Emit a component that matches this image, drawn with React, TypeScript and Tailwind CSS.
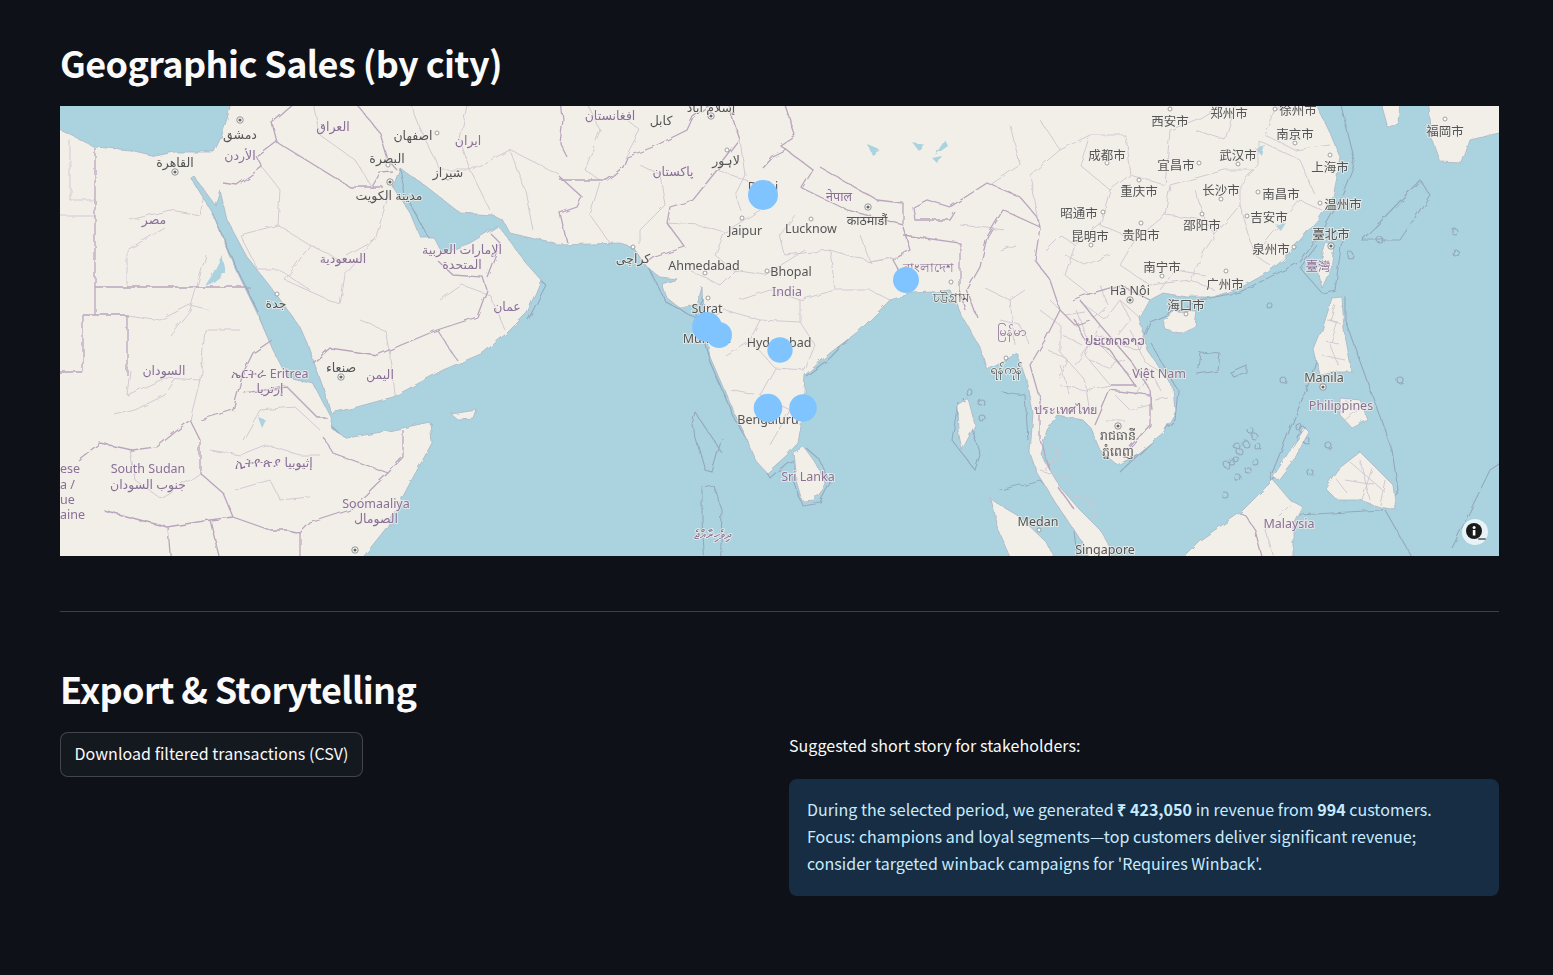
import React from "react";

const WATER = "#aad3df";
const LAND = "#f2efe9";

// Map drawing uses page coordinates through the svg viewBox (60 106 1439 450)
const mainland =
  "M30 118 L60 130 L75 137 L95 147 L130 150 L155 156 L175 152 L214 152 L222 135 L228 115 L235 85 L1310 85 L1317 106 L1330 133 L1340 157 L1337 177 L1333 197 L1320 217 L1300 240 L1283 260 L1267 273 L1240 288 L1213 297 L1187 297 L1163 293 L1150 300 L1140 318 L1147 350 L1173 387 L1175 413 L1163 433 L1133 457 L1117 465 L1100 450 L1090 427 L1083 420 L1057 415 L1047 430 L1040 453 L1060 487 L1080 510 L1100 530 L1110 547 L1116 580 L1098 580 L1083 543 L1060 510 L1037 473 L1030 453 L1033 413 L1028 385 L1017 353 L1003 362 L987 370 L980 347 L970 330 L960 313 L950 290 L932 292 L913 293 L890 300 L860 330 L830 353 L805 375 L802 420 L798 443 L787 455 L767 473 L757 462 L733 410 L710 357 L707 340 L703 313 L702 287 L697 305 L680 308 L667 298 L662 284 L677 279 L660 277 L647 267 L633 247 L620 243 L560 245 L510 233 L503 220 L493 215 L460 213 L427 187 L400 168 L393 187 L410 213 L420 237 L433 237 L443 253 L470 243 L498 226 L507 237 L525 262 L541 280 L527 313 L507 333 L483 353 L443 370 L393 397 L353 408 L331 413 L323 387 L307 343 L300 327 L273 290 L247 257 L227 220 L220 190 L215 205 L194 176 L191 178 L212 212 L233 263 L257 313 L273 350 L287 377 L313 383 L330 416 L333 430 L347 438 L393 430 L430 422 L432 443 L410 483 L387 527 L345 580 L30 580 Z";

const islands = [
  "M1000 505 L1020 517 L1047 543 L1065 580 L1020 580 L998 530 L990 498 Z",
  "M1160 580 L1200 540 L1240 513 L1273 480 L1290 500 L1303 507 L1293 527 L1293 580 Z",
  "M1163 320 L1175 311 L1197 312 L1195 326 L1180 333 L1166 330 Z",
  "M1326 243 L1334 246 L1331 268 L1322 288 L1318 270 Z",
  "M1332 298 L1342 297 L1344 330 L1352 372 L1338 372 L1320 375 L1314 350 L1322 330 Z",
  "M1273 477 L1290 450 L1305 428 L1309 432 L1295 458 L1278 480 Z",
  "M1337 470 L1360 452 L1378 470 L1393 485 L1396 510 L1380 507 L1360 500 L1337 500 L1325 488 Z",
  "M1340 398 L1360 400 L1368 420 L1352 428 L1340 415 Z",
  "M793 452 L804 447 L817 465 L826 485 L815 500 L802 501 L796 480 Z",
  "M1427 85 L1520 85 L1520 128 L1470 140 L1462 163 L1440 162 L1432 140 Z",
  "M1376 85 L1402 85 L1398 122 L1388 128 Z",
  "M451 414 L477 410 L474 419 L458 420 Z",
  "M957 405 L968 398 L975 425 L962 450 L958 430 Z",
];

const maritime = [
  "M1336 85 L1355 162 L1340 200 L1320 235 L1300 262 L1240 292 L1200 300 L1150 322 L1137 350",
  "M1317 245 L1300 268 L1322 293 L1335 290 L1342 240",
  "M1335 300 L1310 380 L1270 478 L1300 515 L1380 510 L1398 490 L1392 450 L1345 320 L1345 297",
  "M1000 490 L1040 480 L1072 515 L1080 580",
  "M1002 392 L1025 395 L1028 440",
  "M1120 472 L1175 420 L1178 390 L1150 342",
  "M1180 580 L1245 510 L1275 478",
  "M1452 548 L1490 470 L1520 450",
  "M1385 510 L1425 580",
  "M722 453 L695 412 L692 425 L705 470 L712 472 L722 438",
  "M702 487 L713 485 L722 510 L720 580 L706 580 L702 520 Z",
  "M707 287 L696 312 L710 362 L735 420 L770 478 L787 463 L805 455",
  "M795 455 L793 480 L802 505 L820 502 L830 483 L820 460 L806 448",
  "M885 302 L855 332 L830 358 L806 376",
  "M633 247 L650 270 L666 302 L700 320",
  "M958 402 L952 440 L975 470 L980 455 L963 398",
  "M258 315 L280 370 L325 420 L347 441 L432 424",
  "M400 168 L405 195 L430 240 L445 258 L498 228",
  "M212 212 L235 265 L258 312",
  "M540 280 L546 285 L528 320",
  "M1420 180 L1380 222 L1362 240 L1400 240 L1430 195 Z",
  "M1200 352 L1220 354 L1218 371 L1197 374 Z",
  "M1230 372 L1246 365 L1246 372 L1234 377 Z",
];

const borders = [
  "M95 148 L95 315",
  "M95 287 L250 287",
  "M83 315 L127 315 L127 375",
  "M83 315 L83 372 L40 372",
  "M78 460 L100 443 L132 450 L157 447 L190 420 L200 440 L200 473",
  "M200 420 L233 410 L243 373 L253 353 L272 340",
  "M243 393 L287 387 L317 417 L327 417",
  "M323 437 L333 453 L388 473 L350 510 L310 523 L300 533 L300 580",
  "M200 473 L223 493 L233 517 L270 530 L287 530 L300 533",
  "M103 510 L140 520 L167 527 L210 520 L233 517",
  "M225 580 L210 520",
  "M168 527 L172 580",
  "M388 473 L403 457 L403 430",
  "M277 142 L350 187 L383 187",
  "M223 183 L237 185 L262 167 L257 157 L277 142 L272 123 L310 90",
  "M345 90 L380 133 L388 160 L397 170",
  "M372 187 L380 173 L393 172",
  "M313 363 L330 348 L377 355 L437 330 L477 317 L487 290 L483 277 L453 275 L437 260",
  "M437 330 L457 360",
  "M487 277 L500 243 L490 233",
  "M567 243 L560 213 L577 207 L582 197 L560 177",
  "M560 180 L607 180 L623 167 L627 157 L653 147 L687 130 L693 117 L730 90",
  "M567 157 L560 143 L563 120 L560 90",
  "M723 90 L740 140 L730 153 L717 170 L693 200 L670 207 L667 223 L685 247 L655 257 L647 263",
  "M780 90 L795 135 L780 145 L813 170 L802 188 L847 210 L903 225 L903 203 L877 200 L820 167",
  "M763 168 L773 157 L787 150",
  "M913 207 L927 200 L950 207 L987 183 L1020 197 L1037 217 L1040 227",
  "M913 207 L915 220 L950 220 L955 212",
  "M903 227 L910 250 L893 260 L910 290",
  "M903 235 L960 243 L960 290 L965 310",
  "M1040 227 L1003 210 L987 237 L980 267 L967 290 L977 317",
  "M1040 227 L1035 260 L1050 280 L1060 310 L1075 325 L1090 320",
  "M1072 300 L1085 295 L1120 285 L1150 300",
  "M1080 300 L1100 325 L1130 360 L1150 390 L1152 410",
  "M1075 320 L1085 340 L1110 350 L1135 385 L1110 385",
  "M1095 425 L1110 390 L1150 395 L1150 425 L1130 447",
  "M1060 310 L1045 340 L1030 365 L1040 400 L1040 440 L1050 470",
  "M1058 487 L1075 510",
  "M1268 580 L1255 530 L1245 515 L1240 513",
];

const provinces = [
  "M70 140 L70 200 L95 200",
  "M40 216 L95 216",
  "M127 315 L160 320 L190 305 L210 310",
  "M130 220 L170 210 L200 215 L205 190",
  "M127 287 L127 250 L165 228",
  "M206 255 L190 310 L170 335",
  "M130 370 L127 395 L165 378 L200 380 L190 420",
  "M200 380 L205 330 L240 330",
  "M115 415 L135 410 L165 395 L175 380",
  "M130 450 L135 480 L160 498 L190 480 L200 473",
  "M243 440 L260 410 L295 407 L320 430",
  "M210 450 L240 455 L265 445 L300 455 L320 455",
  "M235 490 L270 480 L280 500 L310 497",
  "M262 167 L280 190 L278 225 L310 245 L340 260 L375 240 L390 190",
  "M278 225 L240 235 L258 270 L280 270 L310 290",
  "M310 245 L285 280 L340 305 L345 275 L375 240",
  "M360 320 L385 330 L392 365 L395 395",
  "M310 90 L320 135 L355 160 L372 187",
  "M405 90 L425 140 L440 170 L470 170 L490 210",
  "M470 90 L460 140 L470 170 L510 150 L560 175",
  "M510 150 L525 190 L533 230",
  "M440 300 L462 285 L490 295 L505 330",
  "M580 90 L600 130 L585 170 L600 180",
  "M627 120 L640 130 L625 158",
  "M640 165 L660 175 L665 205 L640 230 L640 245",
  "M600 182 L590 215 L610 243",
  "M740 140 L745 175 L735 195 L740 210",
  "M717 170 L760 185 L760 200",
  "M667 223 L700 225 L725 232 L760 210",
  "M725 232 L715 255 L733 270 L765 275 L805 250",
  "M795 215 L780 235 L785 255 L830 250 L870 262 L895 258",
  "M830 250 L835 290 L870 290 L890 300",
  "M835 290 L800 300 L800 322 L760 320 L725 310 L708 320",
  "M760 320 L750 340 L725 355",
  "M800 322 L815 345 L805 370",
  "M750 340 L775 368 L805 370",
  "M775 368 L760 395 L790 410 L770 445",
  "M730 390 L755 395",
  "M960 225 L1005 230",
  "M1000 250 L1015 245",
  "M985 288 L1010 300 L1025 290",
  "M1010 300 L1015 345",
  "M1040 310 L1060 325 L1060 352",
  "M1060 352 L1085 380 L1090 415",
  "M1100 325 L1085 355 L1110 385",
  "M1040 120 L1060 150 L1030 175 L1040 227",
  "M1010 125 L1020 165 L990 185",
  "M1060 150 L1090 135 L1125 135 L1130 175 L1165 185 L1170 130 L1200 118 L1245 90",
  "M1090 135 L1080 165 L1110 190 L1130 175",
  "M1110 190 L1100 225 L1075 245 L1065 275 L1090 295",
  "M1100 225 L1135 240 L1165 215 L1170 185",
  "M1135 240 L1120 265 L1150 285 L1190 280 L1205 250 L1215 235",
  "M1165 215 L1205 220 L1215 235 L1240 205 L1240 185 L1258 165 L1258 140",
  "M1170 185 L1225 170 L1255 170",
  "M1205 220 L1195 190",
  "M1240 205 L1255 255 L1270 265",
  "M1255 255 L1300 200 L1322 210",
  "M1258 140 L1300 160 L1315 195",
  "M1285 90 L1265 135 L1295 150 L1330 145",
  "M1240 90 L1225 140 L1195 130",
  "M1190 280 L1215 290",
  "M1085 305 L1105 320 L1120 300 L1140 318",
  "M1095 335 L1125 340",
  "M1100 345 L1130 375",
  "M1110 385 L1085 390 L1060 385",
  "M1115 395 L1130 410 L1150 405",
  "M1125 420 L1105 420",
  "M1160 390 L1150 370",
  "M1070 495 L1090 500 L1095 520",
  "M1040 470 L1070 480",
  "M1325 340 L1340 345",
  "M1322 355 L1345 360",
  "M1327 320 L1338 322 L1330 345",
  "M1345 480 L1375 485",
  "M1360 460 L1370 500",
  "M1350 462 L1385 492",
  "M1290 505 L1265 530 L1280 580",
  "M1076 310 L1090 345 L1075 365",
  "M1060 365 L1070 395",
  "M1130 330 L1145 362 L1160 372",
  // extra detail for the denser parts of south east asia
  "M1050 300 L1065 315 L1085 312",
  "M1062 335 L1082 345",
  "M1048 350 L1068 360 L1060 378",
  "M1090 360 L1110 368 L1125 360",
  "M1120 345 L1140 350 L1145 335",
  "M1150 372 L1135 395",
  "M1155 400 L1168 398",
  "M1120 300 L1130 320 L1118 335",
  "M1100 285 L1108 305 L1095 318",
  "M1065 255 L1085 265 L1110 255",
  "M1045 250 L1060 235 L1075 245",
  "M1160 290 L1175 270 L1205 275",
  "M1000 320 L1020 325 L1030 345",
  "M1048 440 L1060 450 L1045 470",
  "M1335 305 L1330 320 L1342 325",
  "M1330 345 L1338 365",
  "M1345 400 L1358 410 L1345 420",
  "M1335 478 L1348 494",
  "M1372 468 L1362 500",
  "M1385 480 L1380 505",
  "M860 235 L870 262 L905 255",
  "M690 270 L720 285 L735 270",
  "M740 300 L770 290 L800 300",
];

const reefs = [
  [1283, 380], [1299, 427], [1299, 437], [1303, 430], [1307, 441], [1294, 452], [1250, 430], [1254, 436], [1240, 452],
  [1237, 446], [1246, 444], [1258, 447], [1232, 462], [1227, 465], [1236, 460], [1255, 462], [1248, 470], [1238, 478],
  [1225, 495], [1328, 445], [1310, 472], [1357, 460], [1400, 380], [1455, 232], [1456, 253], [1350, 255], [1380, 240],
  [1270, 306], [981, 402], [970, 393], [982, 418],
];

const lakes = [
  "M205 286 L212 275 L222 255 L226 272 L212 283 Z",
  "M868 145 L880 150 L872 155 Z",
  "M912 142 L925 145 L920 152 Z",
  "M932 158 L942 156 L938 164 Z",
  "M935 155 L945 140 L948 146 Z",
  "M258 417 L266 420 L262 428 Z",
  "M1255 148 L1265 145 L1262 156 Z",
  "M1275 225 L1285 222 L1280 230 Z",
];

type Kind = "city" | "country";
const labels: [string, number, number, Kind?][] = [
  ["العراق", 333, 126, "country"],
  ["ايران", 468, 140, "country"],
  ["الأردن", 240, 155, "country"],
  ["مصر", 154, 219, "country"],
  ["السعودية", 343, 258, "country"],
  ["الإمارات العربية", 462, 249, "country"],
  ["المتحدة", 462, 264, "country"],
  ["عمان", 507, 306, "country"],
  ["افغانستان", 610, 115, "country"],
  ["پاکستان", 673, 171, "country"],
  ["नेपाल", 839, 196, "country"],
  ["বাংলাদেশ", 928, 267, "country"],
  ["India", 787, 291, "country"],
  ["မြန်မာ", 1012, 331, "country"],
  ["ประเทศไทย", 1065, 409, "country"],
  ["ປະເທດລາວ", 1115, 340, "country"],
  ["Việt Nam", 1159, 373, "country"],
  ["Philippines", 1341, 405, "country"],
  ["Malaysia", 1289, 523, "country"],
  ["Sri Lanka", 808, 476, "country"],
  ["ދިވެހިރާއްޖެ", 712, 534, "country"],
  ["臺灣", 1318, 266, "country"],
  ["South Sudan", 148, 468, "country"],
  ["جنوب السودان", 148, 484, "country"],
  ["السودان", 164, 370, "country"],
  ["ኤርትራ Eritrea", 270, 373, "country"],
  ["إرتريا", 270, 388, "country"],
  ["ኢትዮጵያ إثيوبيا", 274, 462, "country"],
  ["Soomaaliya", 376, 503, "country"],
  ["الصومال", 376, 518, "country"],
  ["اليمن", 380, 374, "country"],
  ["دمشق", 240, 134],
  ["القاهرة", 175, 162],
  ["اصفهان", 413, 135],
  ["البصرة", 387, 158],
  ["شيراز", 448, 172],
  ["مدينة الكويت", 389, 195],
  ["جدة", 276, 303],
  ["صنعاء", 341, 367],
  ["كابل", 661, 120],
  ["إسلام آباد", 711, 107],
  ["لاہور", 726, 160],
  ["Delhi", 763, 186],
  ["Jaipur", 745, 230],
  ["Lucknow", 811, 228],
  ["काठमाडौं", 867, 220],
  ["کراچی", 633, 258],
  ["Ahmedabad", 704, 265],
  ["Bhopal", 791, 271],
  ["Surat", 707, 308],
  ["Mumbai", 707, 338],
  ["Hyderabad", 779, 342],
  ["Bengaluru", 768, 419],
  ["চট্টগ্রাম", 951, 297],
  ["ရန်ကုန်", 1006, 369],
  ["រាជធានី", 1118, 435],
  ["ភ្នំពេញ", 1118, 451],
  ["Medan", 1038, 521],
  ["Singapore", 1105, 549],
  ["Manila", 1324, 377],
  ["Hà Nội", 1130, 290],
  ["西安市", 1170, 121],
  ["郑州市", 1229, 113],
  ["徐州市", 1298, 110],
  ["南京市", 1295, 134],
  ["福岡市", 1445, 131],
  ["成都市", 1107, 155],
  ["宜昌市", 1176, 165],
  ["武汉市", 1238, 155],
  ["上海市", 1330, 167],
  ["重庆市", 1139, 191],
  ["长沙市", 1221, 190],
  ["南昌市", 1281, 194],
  ["温州市", 1343, 204],
  ["昭通市", 1079, 213],
  ["邵阳市", 1202, 225],
  ["吉安市", 1269, 217],
  ["昆明市", 1090, 236],
  ["贵阳市", 1141, 235],
  ["臺北市", 1331, 234],
  ["泉州市", 1271, 249],
  ["南宁市", 1162, 267],
  ["广州市", 1225, 284],
  ["海口市", 1186, 305],
];

const towns = [
  [277, 294], [388, 165], [437, 133], [448, 178], [742, 218], [811, 219], [633, 247], [705, 273], [767, 271],
  [708, 298], [727, 150], [951, 282], [1006, 358], [1039, 530], [1170, 109], [1275, 109], [1295, 143], [1107, 163],
  [1199, 163], [1238, 164], [1330, 155], [1139, 180], [1221, 199], [1258, 192], [1320, 203], [1103, 212], [1202, 214],
  [1247, 216], [1091, 245], [1141, 223], [1294, 247], [1162, 276], [1226, 271], [1186, 314], [1445, 119],
];

const capitals = [
  [240, 120], [175, 172], [390, 182], [711, 116], [868, 207], [1331, 246], [1130, 300], [1323, 387], [1118, 426], [341, 377], [355, 550],
];

const cityDots = [
  [763, 195, 15],
  [906, 280, 13],
  [707, 327, 15],
  [719, 335, 13],
  [780, 350, 12.7],
  [768, 408, 14.3],
  [803, 408, 13.8],
];

function SalesMap() {
  return (
    <svg viewBox="60 106 1439 450" className="block w-full h-[450px] blur-[0.35px]">
      <defs>
        <filter id="rough" filterUnits="userSpaceOnUse" x="20" y="70" width="1520" height="520">
          <feTurbulence type="fractalNoise" baseFrequency="0.09" numOctaves="2" seed="4" />
          <feDisplacementMap in="SourceGraphic" scale="5" />
        </filter>
      </defs>
      <rect x="60" y="106" width="1439" height="450" fill={WATER} />
      <g filter="url(#rough)">
        <g fill="none" stroke="#95a8bd" strokeWidth="1.1">
          {maritime.map((d) => (
            <path key={d} d={d} />
          ))}
          {reefs.map(([x, y]) => (
            <circle key={`${x}-${y}`} cx={x} cy={y} r="3" />
          ))}
        </g>
        <g fill={LAND} stroke="#a9b5c4" strokeWidth="0.8">
          <path d={mainland} />
          {islands.map((d) => (
            <path key={d} d={d} />
          ))}
        </g>
        <g fill={WATER}>
          {lakes.map((d) => (
            <path key={d} d={d} />
          ))}
        </g>
        <g fill="none" stroke="#d0c4d0" strokeWidth="0.9">
          {provinces.map((d) => (
            <path key={d} d={d} />
          ))}
        </g>
        <g fill="none" stroke="#b9a6bd" strokeWidth="1.3">
          {borders.map((d) => (
            <path key={d} d={d} />
          ))}
        </g>
      </g>
      {towns.map(([x, y]) => (
        <circle key={`${x}-${y}`} cx={x} cy={y} r="2" fill="#fff" stroke="#8a8a8a" strokeWidth="0.8" />
      ))}
      {capitals.map(([x, y]) => (
        <g key={`${x}-${y}`}>
          <circle cx={x} cy={y} r="3.2" fill="#fff" stroke="#777" strokeWidth="0.8" />
          <circle cx={x} cy={y} r="1.6" fill="#666" />
        </g>
      ))}
      <g textAnchor="middle" dominantBaseline="central" className="font-['Noto_Sans','Noto_Sans_CJK_SC','DejaVu_Sans',sans-serif] text-[12.5px]">
        {labels.map(([text, x, y, kind]) => (
          <text
            key={text}
            x={x}
            y={y}
            fill={kind === "country" ? "#8a6f96" : "#545454"}
            stroke={LAND}
            strokeOpacity="0.75"
            strokeWidth="2"
            paintOrder="stroke"
          >
            {text}
          </text>
        ))}
      </g>
      <g className="font-['Noto_Sans',sans-serif] text-[12.5px]" fill="#8a6f96" stroke={LAND} strokeOpacity="0.75" strokeWidth="2" paintOrder="stroke">
        <text x="60" y="473">ese</text>
        <text x="60" y="489">a /</text>
        <text x="60" y="504">ue</text>
        <text x="60" y="519">aine</text>
      </g>
      {cityDots.map(([x, y, r]) => (
        <circle key={`${x}-${y}`} cx={x} cy={y} r={r} fill="#80c4ff" />
      ))}
      {/* attribution button */}
      <circle cx="1475" cy="532" r="13" fill="#fff" fillOpacity="0.72" />
      <circle cx="1474" cy="531" r="8" fill="#1b1b1b" />
      <rect x="1472.8" y="530" width="2.6" height="5.5" fill="#fff" />
      <circle cx="1474.1" cy="527.4" r="1.5" fill="#fff" />
      <rect x="1478" y="538" width="8" height="2" rx="1" fill="#555" fillOpacity="0.75" />
    </svg>
  );
}

export default function App() {
  return (
    <div className="min-h-[975px] bg-[#0e1117] pl-[60px] pr-[54px] pt-[36px] text-[#fafafa] font-['Noto_Sans_CJK_SC','Liberation_Sans',sans-serif]">
      <h2 className="h-[70px] text-[36px] font-semibold leading-[52px] tracking-[-0.6px]">Geographic Sales (by city)</h2>
      <SalesMap />
      <hr className="mt-[55px] border-t border-[#fafafa]/20" />
      <h2 className="mt-[50px] h-[70px] text-[36px] font-semibold leading-[52px] tracking-[-0.6px]">Export &amp; Storytelling</h2>
      <div className="flex justify-between">
        <div>
          <button className="h-[45px] w-[303px] rounded-lg border border-[#fafafa]/20 bg-[#14181f] pb-[3px] text-[16px] tracking-[0.05px]">
            Download filtered transactions (CSV)
          </button>
        </div>
        <div className="w-[710px]">
          <p className="h-[47px] text-[16px] leading-[27px] tracking-[0.05px]">Suggested short story for stakeholders:</p>
          <div className="rounded-lg bg-[#172d43] px-[18px] pb-[19px] pt-[17px] text-[16px] leading-[27px] tracking-[0.03px] text-[#c7ebff]">
            During the selected period, we generated <strong className="font-semibold">₹ 423,050</strong> in revenue from{" "}
            <strong className="font-semibold">994</strong> customers.
            <br />
            Focus: champions and loyal segments—top customers deliver significant revenue;
            <br />
            consider targeted winback campaigns for 'Requires Winback'.
          </div>
        </div>
      </div>
    </div>
  );
}
